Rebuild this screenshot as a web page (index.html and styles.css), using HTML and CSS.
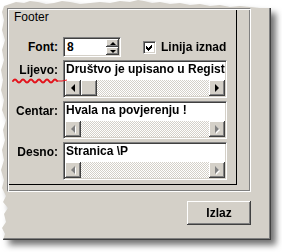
FILE: index.html
```html
<!DOCTYPE html>
<html lang="hr">

<head>
    <meta charset="UTF-8">
    <meta name="viewport" content="width=device-width, initial-scale=1.0">
    <title>Footer</title>
    <link rel="stylesheet" href="styles.css">
</head>

<body>
    <div class="shot">
        <div class="window">
            <div class="etched">
                <div class="panel">
                    <div class="legend">Footer</div>
                    <div class="form">
                        <label class="lbl lbl-mid">Font:</label>
                        <div class="font-row">
                            <div class="spin sunken">
                                <span class="spin-val">8</span>
                                <div class="spin-btns">
                                    <span class="sbtn"><i class="tri tri-up"></i></span>
                                    <span class="sbtn"><i class="tri tri-down"></i></span>
                                </div>
                            </div>
                            <span class="check sunken">
                                <svg width="9" height="9" viewBox="0 0 9 9">
                                    <polygon points="1,3 3,5 7,1 7,4 3,8 1,6" fill="#000"/>
                                </svg>
                            </span>
                            <span class="check-text">Linija iznad</span>
                        </div>

                        <label class="lbl">Lijevo:</label>
                        <div class="memo sunken">
                            <div class="memo-text">Društvo je upisano u Registar trgovačkog suda</div>
                            <div class="hscroll">
                                <span class="sb-btn"><i class="arr arr-left"></i></span>
                                <span class="sb-btn"></span>
                                <span class="sb-track"></span>
                                <span class="sb-btn"><i class="arr arr-right"></i></span>
                            </div>
                        </div>

                        <label class="lbl">Centar:</label>
                        <div class="memo sunken">
                            <div class="memo-text">Hvala na povjerenju !</div>
                            <div class="hscroll">
                                <span class="sb-btn"><i class="arr arr-left off"></i></span>
                                <span class="sb-track"></span>
                                <span class="sb-btn"><i class="arr arr-right off"></i></span>
                            </div>
                        </div>

                        <label class="lbl">Desno:</label>
                        <div class="memo sunken">
                            <div class="memo-text">Stranica \P</div>
                            <div class="hscroll">
                                <span class="sb-btn"><i class="arr arr-left off"></i></span>
                                <span class="sb-track"></span>
                                <span class="sb-btn"><i class="arr arr-right off"></i></span>
                            </div>
                        </div>
                    </div>
                </div>
            </div>
            <div class="actions">
                <button class="btn">Izlaz</button>
            </div>
        </div>
    </div>

    <!-- crvena oznaka ispod "Lijevo:" -->
    <svg class="squiggle" width="282" height="252" viewBox="0 0 282 252">
        <path d="M13,81 q2,-3 4,0 t4,0 t4,0 t4,0 t4,0 t4,0 t4,0 t4,0 t4,0 t4,0 t4,0" fill="none" stroke="#e3121b" stroke-width="2" stroke-linecap="round"/>
        <path d="M57,81 L62,81 L67,80" fill="none" stroke="#e3121b" stroke-width="1"/>
    </svg>
</body>

</html>
```

FILE: styles.css
```css
*{
    margin: 0;
    padding: 0;
    box-sizing: border-box;
}
html,body{
    width: 282px;
    height: 252px;
    overflow: hidden;
    background: #fff;
}
body{
    font-family: "Liberation Sans", Arial, sans-serif;
    font-size: 12px;
    line-height: 14px;
    color: #000;
    position: relative;
}
.shot{
    width: 271px;
    height: 240px;
    filter: drop-shadow(5px 5px 3px rgba(0,0,0,0.55));
}
.window{
    width: 271px;
    height: 240px;
    background: #d4d0c8;
    padding: 8px 0 0 7px;
    box-shadow: inset -1px -1px #404040, inset -2px -2px #808080;
    clip-path: polygon(4px 6px, 10px 4px, 16px 2px, 24px 3px, 30px 1px, 38px 2px, 46px 4px, 54px 3px, 62px 1px, 70px 2px, 80px 4px, 90px 3px, 100px 2px, 110px 3px, 120px 1px, 130px 2px, 138px 0, 144px 1px, 152px 3px, 160px 2px, 170px 4px, 180px 3px, 190px 5px, 200px 4px, 210px 6px, 220px 5px, 230px 7px, 240px 6px, 250px 7px, 260px 8px, 271px 8px, 271px 240px, 3px 240px, 5px 234px, 2px 228px, 6px 222px, 4px 214px, 8px 208px, 3px 202px, 6px 196px, 2px 188px, 4px 180px, 1px 170px, 4px 160px, 2px 150px, 5px 140px, 3px 130px, 6px 120px, 2px 110px, 4px 100px, 1px 90px, 3px 80px, 1px 70px, 4px 60px, 2px 50px, 5px 40px, 2px 30px, 4px 20px, 2px 12px);
}
.etched{
    width: 244px;
    height: 184px;
    padding: 1px;
    border: 1px solid;
    border-color: #808080 #fff #fff #808080;
    box-shadow: inset 1px 1px #fff, inset -1px -1px #808080;
}
.panel{
    width: 228px;
    height: 175px;
    border-right: 1px solid #000;
    border-bottom: 1px solid #000;
}
.legend{
    padding-left: 5px;
}
.form{
    display: grid;
    grid-template-columns: 49px 164px;
    grid-template-rows: 20px 38px 38px 38px;
    column-gap: 5px;
    row-gap: 3px;
    margin-top: 13px;
}
.lbl{
    font-weight: bold;
    text-align: right;
    padding-top: 3px;
}
.lbl-mid{
    align-self: center;
    padding-top: 0;
}
.sunken{
    border: 1px solid;
    border-color: #808080 #fff #fff #808080;
    box-shadow: inset 1px 1px #404040, inset -1px -1px #d4d0c8;
    padding: 1px;
    background: #fff;
}
.font-row{
    display: flex;
    align-items: center;
}
.spin{
    width: 58px;
    height: 20px;
    display: flex;
}
.spin-val{
    flex: 1;
    padding-left: 2px;
    font-weight: bold;
    line-height: 16px;
}
.spin-btns{
    width: 13px;
    display: flex;
    flex-direction: column;
}
.sbtn,.sb-btn{
    display: flex;
    align-items: center;
    justify-content: center;
    background: #d4d0c8;
    box-shadow: inset -1px -1px #404040, inset 1px 1px #fff, inset -2px -2px #808080;
}
.sbtn{
    height: 8px;
}
.tri{
    width: 0;
    height: 0;
    border-left: 3px solid transparent;
    border-right: 3px solid transparent;
}
.tri-up{
    border-bottom: 3px solid #000;
}
.tri-down{
    border-top: 3px solid #000;
}
.check{
    width: 13px;
    height: 13px;
    margin-left: 22px;
    display: flex;
}
.check svg{
    shape-rendering: crispEdges;
}
.check-text{
    margin-left: 5px;
    font-weight: bold;
}
.memo{
    display: flex;
    flex-direction: column;
}
.memo-text{
    height: 18px;
    padding-left: 1px;
    font-weight: bold;
    white-space: nowrap;
    overflow: hidden;
}
.hscroll{
    height: 16px;
    display: flex;
}
.sb-btn{
    width: 16px;
    height: 16px;
}
.sb-track{
    flex: 1;
    background-color: #fff;
    background-image: conic-gradient(#d4d0c8 25%, #fff 0 50%, #d4d0c8 0 75%, #fff 0);
    background-size: 2px 2px;
}
.arr{
    width: 0;
    height: 0;
    border-top: 4px solid transparent;
    border-bottom: 4px solid transparent;
}
.arr-left{
    border-right: 4px solid #000;
}
.arr-right{
    border-left: 4px solid #000;
}
.arr-left.off{
    border-right-color: #808080;
    filter: drop-shadow(1px 1px 0 #fff);
}
.arr-right.off{
    border-left-color: #808080;
    filter: drop-shadow(1px 1px 0 #fff);
}
.actions{
    width: 244px;
    display: flex;
    justify-content: flex-end;
    margin-top: 9px;
}
.btn{
    width: 64px;
    height: 24px;
    background: #d4d0c8;
    border: none;
    font-family: "Liberation Sans", Arial, sans-serif;
    font-size: 12px;
    font-weight: bold;
    color: #000;
    box-shadow: inset -1px -1px #404040, inset 1px 1px #fff, inset -2px -2px #808080;
}
.squiggle{
    position: absolute;
    left: 0;
    top: 0;
    pointer-events: none;
}
```
